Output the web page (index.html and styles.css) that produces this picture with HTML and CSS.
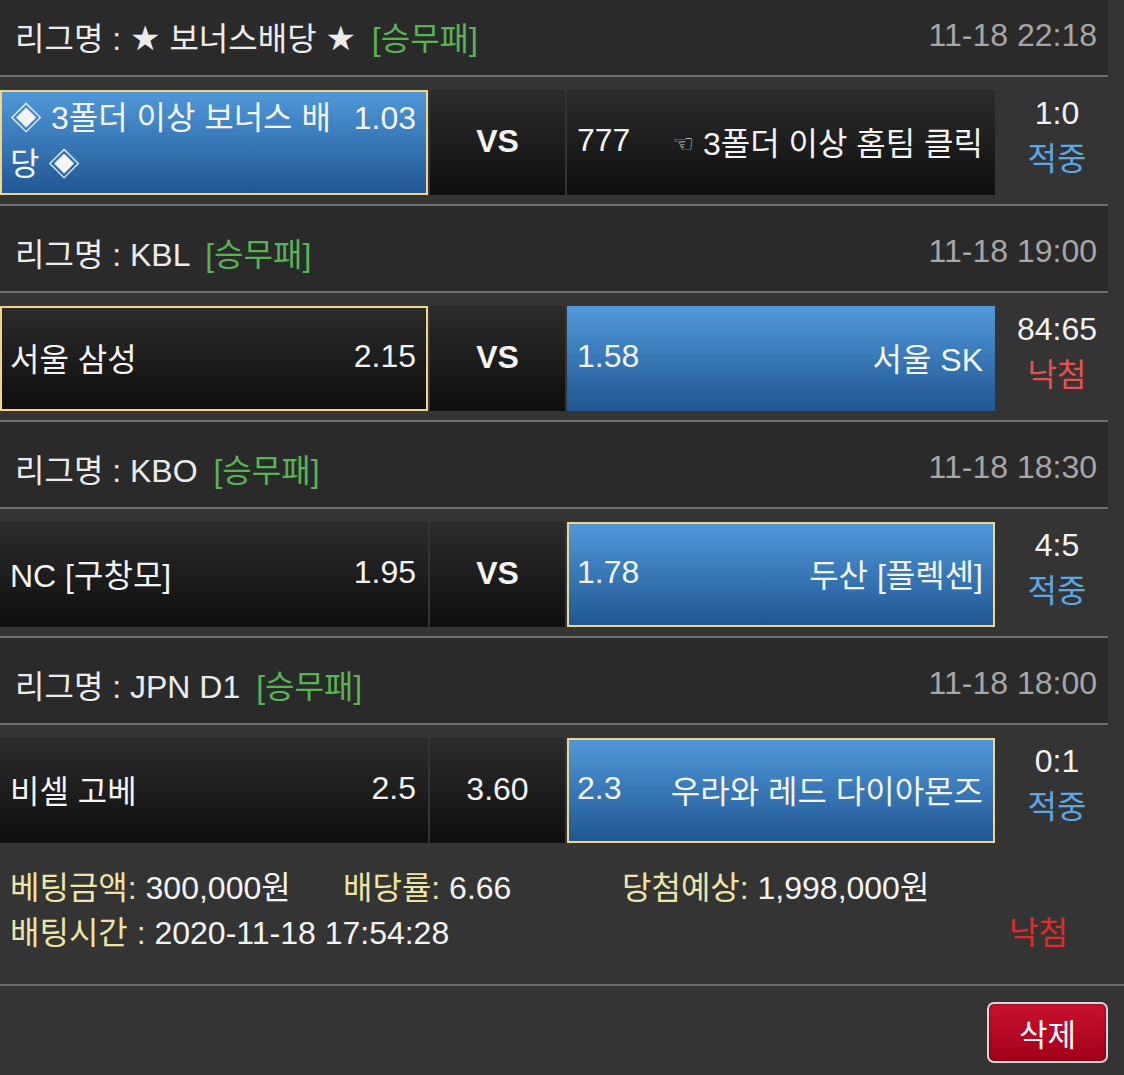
FILE: index.html
```html
<!DOCTYPE html>
<html lang="ko">
<head>
<meta charset="utf-8">
<title>베팅내역</title>
<link rel="stylesheet" href="styles.css">
</head>
<body>
<div class="board">
  <div class="league">
    <span class="title">리그명 : <span class="star">★</span> 보너스배당 <span class="star">★</span> <span class="cat">[승무패]</span></span>
    <span class="date">11-18 22:18</span>
  </div>
  <div class="match">
    <div class="cell home win pick">
      <div class="wrap"><span class="odds-float">1.03</span>◈ 3폴더 이상 보너스 배당 ◈</div>
    </div>
    <div class="cell mid"><b class="vs">VS</b></div>
    <div class="cell away">
      <span>777</span>
      <span><span class="hand">☜</span> 3폴더 이상 홈팀 클릭</span>
    </div>
    <div class="score"><div>1:0</div><div class="hit">적중</div></div>
  </div>

  <div class="league">
    <span class="title">리그명 : KBL <span class="cat">[승무패]</span></span>
    <span class="date">11-18 19:00</span>
  </div>
  <div class="match">
    <div class="cell home pick">
      <span>서울 삼성</span>
      <span>2.15</span>
    </div>
    <div class="cell mid"><b class="vs">VS</b></div>
    <div class="cell away win">
      <span>1.58</span>
      <span>서울 SK</span>
    </div>
    <div class="score"><div>84:65</div><div class="miss">낙첨</div></div>
  </div>

  <div class="league">
    <span class="title">리그명 : KBO <span class="cat">[승무패]</span></span>
    <span class="date">11-18 18:30</span>
  </div>
  <div class="match">
    <div class="cell home">
      <span>NC [구창모]</span>
      <span>1.95</span>
    </div>
    <div class="cell mid"><b class="vs">VS</b></div>
    <div class="cell away win pick">
      <span>1.78</span>
      <span>두산 [플렉센]</span>
    </div>
    <div class="score"><div>4:5</div><div class="hit">적중</div></div>
  </div>

  <div class="league">
    <span class="title">리그명 : JPN D1 <span class="cat">[승무패]</span></span>
    <span class="date">11-18 18:00</span>
  </div>
  <div class="match">
    <div class="cell home">
      <span>비셀 고베</span>
      <span>2.5</span>
    </div>
    <div class="cell mid"><span>3.60</span></div>
    <div class="cell away win pick">
      <span>2.3</span>
      <span>우라와 레드 다이아몬즈</span>
    </div>
    <div class="score"><div>0:1</div><div class="hit">적중</div></div>
  </div>
</div>

<div class="summary">
  <div><span class="label">베팅금액:</span> 300,000원</div>
  <div><span class="label">배당률:</span> 6.66</div>
  <div><span class="label">당첨예상:</span> 1,998,000원</div>
  <div class="time"><span class="label">배팅시간 :</span> 2020-11-18 17:54:28</div>
  <div class="result">낙첨</div>
</div>

<div class="actions">
  <button class="del">삭제</button>
</div>
</body>
</html>
```

FILE: styles.css
```css
html, body {
  margin: 0;
  padding: 0;
}

body {
  background: #343434;
  color: #f2f2f2;
  font-family: "Liberation Sans", "Noto Sans CJK KR", sans-serif;
  font-size: 32px;
  overflow: hidden;
}

.board {
  width: 1108px;
  margin-top: -10px;
}

.league {
  height: 87px;
  box-sizing: border-box;
  padding: 6px 11px 0 15px;
  display: flex;
  align-items: center;
  background: #2a2a2a;
  color: #ececec;
  border-bottom: 2px solid #6d6d6d;
  white-space: nowrap;
}

.star {
  font-family: "DejaVu Sans", sans-serif;
  font-size: 34px;
  line-height: 1;
}

.cat {
  color: #58b352;
  margin-left: 7px;
}

.date {
  margin-left: auto;
  color: #a6a6a6;
}

.match {
  display: flex;
  align-items: flex-start;
  padding: 13px 0 9px;
  border-bottom: 2px solid #6d6d6d;
  background: #343434;
}

.match:last-child {
  border-bottom: none;
}

.cell {
  height: 105px;
  box-sizing: border-box;
  border: 2px solid transparent;
  background: linear-gradient(#2c2c2c, #0e0e0e) border-box;
  display: flex;
  align-items: center;
  justify-content: space-between;
  padding: 0 10px 4px 8px;
  color: #f4f4f4;
  white-space: nowrap;
}

.home,
.away {
  width: 428px;
}

.mid {
  width: 135px;
  margin: 0 2px;
  justify-content: center;
  padding: 0 0 2px;
}

.vs {
  font-size: 32px;
  font-weight: bold;
}

.win {
  background: linear-gradient(#5199db, #1f5691) border-box;
}

.pick {
  border-color: #f1d58b;
}

.wrap {
  width: 100%;
  line-height: 46px;
  white-space: normal;
}

.odds-float {
  float: right;
  margin-left: 16px;
}

.hand {
  font-family: "DejaVu Sans", sans-serif;
  font-size: 24px;
  color: #d0d0d0;
  vertical-align: 3px;
}

.score {
  width: 102px;
  padding-left: 11px;
  text-align: center;
  line-height: 46px;
  color: #f2f2f2;
}

.hit {
  color: #5ea6e2;
}

.miss {
  color: #e2524f;
}

.summary {
  display: grid;
  grid-template-columns: 333px 279px 1fr;
  padding: 14px 56px 28px 10px;
  line-height: 45px;
  color: #f4f4f4;
  white-space: nowrap;
}

.label {
  color: #eee4a6;
}

.time {
  grid-column: 1 / 3;
}

.result {
  justify-self: end;
  color: #e12a2a;
}

.actions {
  border-top: 2px solid #6d6d6d;
  display: flex;
  justify-content: flex-end;
  padding: 16px 16px 0;
}

.del {
  width: 121px;
  height: 61px;
  box-sizing: border-box;
  border: 2px solid #d6d6d6;
  border-radius: 7px;
  background: linear-gradient(#c9112f, #a3001a);
  color: #ffffff;
  font-family: inherit;
  font-size: 31px;
  padding: 0;
  box-shadow: inset 0 0 3px rgba(0, 0, 0, 0.5);
}
```
